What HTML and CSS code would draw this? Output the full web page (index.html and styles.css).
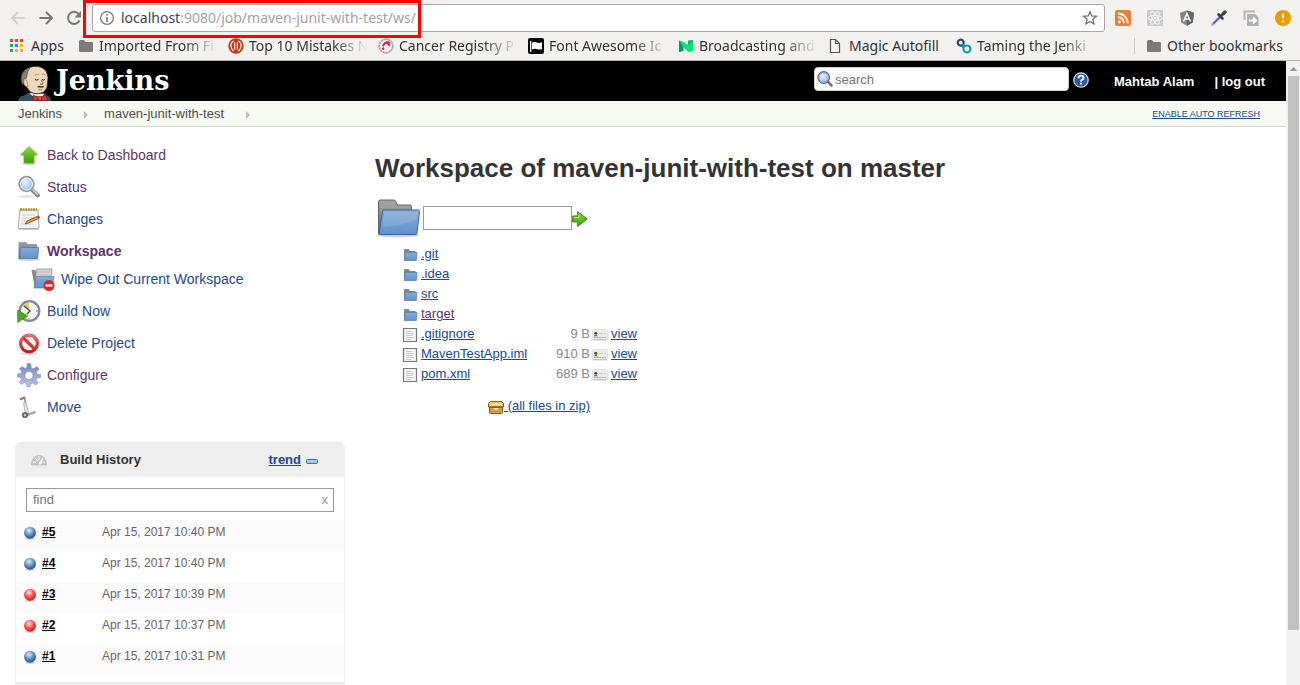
FILE: index.html
```html
<!DOCTYPE html>
<html lang="en">
<head>
<meta charset="utf-8">
<title>Workspace of maven-junit-with-test on master [Jenkins]</title>
<link rel="stylesheet" href="styles.css">
</head>
<body>
<svg class="defs" aria-hidden="true">
  <defs>
    <linearGradient id="blueFill" x1="0" y1="0" x2="0" y2="1"><stop offset="0" stop-color="#85add9"/><stop offset="1" stop-color="#5f92cb"/></linearGradient>
    <linearGradient id="greyFill" x1="0" y1="0" x2="0" y2="1"><stop offset="0" stop-color="#a3a3a3"/><stop offset="1" stop-color="#666"/></linearGradient>
    <linearGradient id="greenFill" x1="0" y1="0" x2="0" y2="1"><stop offset="0" stop-color="#8fda3a"/><stop offset="1" stop-color="#3c9d08"/></linearGradient>
    <linearGradient id="gearFill" x1="0" y1="0" x2="0" y2="1"><stop offset="0" stop-color="#6d87b5"/><stop offset="1" stop-color="#c5c1e6"/></linearGradient>
    <linearGradient id="redFill" x1="0" y1="0" x2="0" y2="1"><stop offset="0" stop-color="#f07070"/><stop offset="1" stop-color="#cc1010"/></linearGradient>
    <radialGradient id="blueBall" cx=".42" cy=".32" r=".65"><stop offset="0" stop-color="#e4efec"/><stop offset=".5" stop-color="#6f9ccb"/><stop offset="1" stop-color="#24539a"/></radialGradient>
    <radialGradient id="redBall" cx=".42" cy=".32" r=".65"><stop offset="0" stop-color="#ffe4e4"/><stop offset=".5" stop-color="#fa6060"/><stop offset="1" stop-color="#e01818"/></radialGradient>
    <radialGradient id="lens" cx=".4" cy=".35" r=".7"><stop offset="0" stop-color="#e6f1fc"/><stop offset="1" stop-color="#8fb8e8"/></radialGradient>
  </defs>
  <symbol id="tabFolder" viewBox="0 0 16 16"><path d="M1 3.500q0-1.500 1.500-1.500H6l1.500 2H14q1 0 1 1v8q0 1-1 1H2q-1 0-1-1z" fill="#7b7b7b"/></symbol>
  <symbol id="folder" viewBox="0 0 44 40">
    <ellipse cx="22" cy="37" rx="21" ry="2.500" fill="#000" opacity=".18"/>
    <path d="M2.500 36V3.500q0-1.500 1.500-1.500h14q1 0 1.500 1l2 4H34q1.500 0 1.500 1.500v27.500z" fill="url(#greyFill)" stroke="#666"/>
    <path d="M5 6h14M5 9h29M5 12h29" stroke="#b5b5b5" opacity=".6"/>
    <path d="M6.500 13.500q0-1.500 1.500-1.500h34q1.500 0 1.500 1.500l-2.500 21.500q-.2 1.500-1.500 1.500H4.500q-1.500 0-1.300-1.500z" fill="url(#blueFill)" stroke="#3465a4"/>
    <path d="M8 13.500h34l-1 8Q26 28 6.500 29z" fill="#fff" opacity=".12"/>
  </symbol>
  <symbol id="mediumFolder" viewBox="0 0 24 24"><ellipse cx="12" cy="20.500" rx="11" ry="1.500" fill="#000" opacity=".18"/><path d="M1.500 20V4q0-1 1-1h7l1 2H19q1 0 1 1v14z" fill="url(#greyFill)"/><path d="M4 8.500h17.500l-.8 11H2.800z" fill="url(#blueFill)" stroke="#5784b8"/></symbol>
  <symbol id="smallFolder" viewBox="0 0 16 16"><path d="M2 13.500V3q0-1 1-1h3.500L8 4h5.500v9z" fill="#858585"/><path d="M3.500 5.500h11.500l-.7 8H2.600z" fill="url(#blueFill)" stroke="#5784b8" stroke-width=".8"/></symbol>
  <symbol id="file" viewBox="0 0 16 16"><path d="M1.500 1.500h13v13h-13z" fill="#f4f4f3" stroke="#777" stroke-width="1.200"/><path d="M4 4.500h6M4 6.500h8M4 8.500h7M4 10.500h8M4 12.500h5" stroke="#c8c8c8" stroke-width=".9"/></symbol>
  <symbol id="card" viewBox="0 0 16 12"><rect x=".5" y=".5" width="15" height="10.500" rx="1" fill="#ebebea" stroke="#e2e2e2"/><path d="M1 10.700h14" stroke="#bbb"/><circle cx="3.800" cy="4.300" r="1.500" fill="#6a4b16"/><path d="M1.800 7.200q2-3 4 0z" fill="#4e7d16"/><path d="M7 4.500h4m1 0h2" stroke="#ccc"/><path d="M2 8.500h12" stroke="#aaa" stroke-dasharray="2 .6"/></symbol>
  <symbol id="magnifier" viewBox="0 0 24 24"><ellipse cx="10" cy="21.500" rx="9" ry="1.500" fill="#000" opacity=".1"/><path d="m14 14 7 6.500" stroke="#888" stroke-width="4" stroke-linecap="round"/><path d="m15.500 14.500 5.500 5" stroke="#ddd" stroke-width="1.500"/><circle cx="9.500" cy="9" r="7.300" fill="url(#lens)" stroke="#999" stroke-width="1.800"/><circle cx="9.500" cy="9" r="6" fill="none" stroke="#eef4fb"/></symbol>
  <symbol id="searchIcon" viewBox="0 0 16 16"><path d="m11 11 3.500 3.500" stroke="#777" stroke-width="2.600" stroke-linecap="round"/><circle cx="6.700" cy="6.500" r="5.800" fill="url(#lens)" stroke="#666" stroke-width="1.200"/><circle cx="6.700" cy="6.500" r="4.600" fill="none" stroke="#86aee0"/></symbol>
  <symbol id="blue" viewBox="0 0 14 14"><ellipse cx="7" cy="12.600" rx="5" ry="1.200" fill="#000" opacity=".18"/><circle cx="7" cy="6.700" r="6" fill="url(#blueBall)"/></symbol>
  <symbol id="red" viewBox="0 0 14 14"><ellipse cx="7" cy="12.600" rx="5" ry="1.200" fill="#000" opacity=".18"/><circle cx="7" cy="6.700" r="6" fill="url(#redBall)"/></symbol>
</svg>

<header class="browser">
  <div class="toolbar">
    <button class="nav" aria-label="Back"><svg width="16" height="16" viewBox="0 0 16 16"><path d="M14.500 8H2M8 2 2 8l6 6" fill="none" stroke="#d2d0ce" stroke-width="2"/></svg></button>
    <button class="nav" aria-label="Forward"><svg width="16" height="16" viewBox="0 0 16 16"><path d="M1.500 8H14M8 2l6 6-6 6" fill="none" stroke="#777" stroke-width="2"/></svg></button>
    <button class="nav" aria-label="Reload"><svg width="16" height="16" viewBox="0 0 16 16"><path d="M13.500 10.500A6 6 0 1 1 12.700 4" fill="none" stroke="#777" stroke-width="2"/><path d="M15 1v6.500H8.500z" fill="#777"/></svg></button>
    <div class="address">
      <svg width="16" height="16" viewBox="0 0 16 16"><circle cx="8" cy="8" r="6.400" fill="none" stroke="#777" stroke-width="1.300"/><path d="M8 7v5M8 4v1.700" stroke="#777" stroke-width="1.600"/></svg>
      <span class="url"><b>localhost</b>:9080/job/maven-junit-with-test/ws/</span>
      <button aria-label="Bookmark this page"><svg width="16" height="16" viewBox="0 0 16 16"><path d="m8 1.700 1.800 4.200 4.600.4-3.500 3 1.100 4.500L8 11.400l-4 2.400 1.100-4.500-3.500-3 4.600-.4z" fill="none" stroke="#707070" stroke-width="1.300"/></svg></button>
      <div class="highlight"></div>
    </div>
    <div class="extensions">
      <button aria-label="RSS"><svg width="16" height="16" viewBox="0 0 16 16"><rect width="16" height="16" rx="2.500" fill="#ed7d2b"/><circle cx="4.400" cy="11.700" r="1.500" fill="#fff"/><path d="M3 7.200a6 6 0 0 1 6 6M3 3.500a9.700 9.700 0 0 1 9.700 9.700" fill="none" stroke="#fff" stroke-width="1.900"/></svg></button>
      <button aria-label="React tools"><svg width="16" height="16" viewBox="0 0 16 16"><rect width="16" height="16" fill="#cbcbcb"/><g fill="none" stroke="#f4f4f4"><ellipse cx="8" cy="8" rx="7" ry="2.600"/><ellipse cx="8" cy="8" rx="7" ry="2.600" transform="rotate(60 8 8)"/><ellipse cx="8" cy="8" rx="7" ry="2.600" transform="rotate(120 8 8)"/></g><circle cx="8" cy="8" r="1.300" fill="#fff"/></svg></button>
      <button aria-label="Angular tools"><svg width="16" height="16" viewBox="0 0 16 16"><path d="m8 .5 7 2.300-1.200 9.700L8 15.700l-5.800-3.200L1 2.800z" fill="#858585"/><path d="m8 .5 7 2.300-1.200 9.700L8 15.700z" fill="#666"/><path d="M4.500 11.500 8 3.500l3.500 8M6 9h4" fill="none" stroke="#fff" stroke-width="1.500"/></svg></button>
      <button aria-label="Colour picker"><svg width="16" height="16" viewBox="0 0 16 16"><path d="m1.500 14.500 8-8" stroke="#aaa" stroke-width="2.800" stroke-linecap="round"/><path d="m2.500 13.500 6-6" stroke="#335de0" stroke-width="1.600"/><path d="m7.500 4.500 4 4M10.500 5.500l3-3" stroke="#404040" stroke-width="2.600" stroke-linecap="round"/><path d="M12.500 3.500 14 2" stroke="#444" stroke-width="3.500" stroke-linecap="round"/></svg></button>
      <button aria-label="Tab tool"><svg width="16" height="16" viewBox="0 0 16 16"><path d="M1.500 10V1.500H12" fill="none" stroke="#b5b5b5" stroke-width="2"/><path d="M4 4h8l3.500 3.500V16H4z" fill="#b0b0b0"/><path d="M6 10.500h7M10 7.500l3 3-3 3" fill="none" stroke="#fff" stroke-width="1.800"/></svg></button>
      <button aria-label="Browser menu"><svg width="16" height="16" viewBox="0 0 16 16"><circle cx="8" cy="8" r="8" fill="#f29900"/><path d="M8 3.500v5M8 10.500v2" stroke="#fff" stroke-width="2"/></svg></button>
    </div>
  </div>
  <nav class="bookmarks" aria-label="Bookmarks">
    <a class="apps" href="#"><svg width="14" height="14" viewBox="0 0 14 14"><path d="M0 0h3v3H0zM5 0h3v3H5zM10 0h3v3h-3z" fill="#e6413a"/><path d="M0 5h3v3H0zM0 10h3v3H0z" fill="#28a35a"/><path d="M5 5h3v3H5z" fill="#3d7bea"/><path d="M10 5h3v3h-3zM5 10h3v3H5zM10 10h3v3h-3z" fill="#f4b400"/></svg><span>Apps</span></a>
    <a class="mark" href="#"><svg width="16" height="16"><use href="#tabFolder"/></svg><span>Imported From Fi</span></a>
    <a class="mark" href="#"><svg width="16" height="16" viewBox="0 0 16 16"><circle cx="8" cy="8" r="7.700" fill="#c63b17"/><path d="M6 3Q2.500 4.500 3 8q.2 3.500 3 5M10 3q3.500 1.500 3 5-.2 3.500-3 5M6.700 4.500v7M9.300 4.500v7" fill="none" stroke="#fff" stroke-width="1.100"/></svg><span>Top 10 Mistakes N</span></a>
    <a class="mark" href="#"><svg width="16" height="16" viewBox="0 0 16 16"><circle cx="8" cy="8" r="6.800" fill="#f2f2f2" stroke="#aaa" stroke-width="1.800" stroke-dasharray="2.500 .4"/><path d="M6 4.500 9.500 3 12 4v5L9.500 6.500 6 9 4 8z" fill="#f0143f"/><path d="m5.500 8 3-2.500L10 8l-3 2.500z" fill="#fff"/><path d="m3.500 11 2-2 1 1.500-1 1.500z" fill="#f0143f"/></svg><span>Cancer Registry P</span></a>
    <a class="mark" href="#"><svg width="16" height="16" viewBox="0 0 16 16"><rect width="16" height="16" rx="2" fill="#000"/><path d="M4 4.500q3-1 5 0t5-.3V11q-3 1-5 .2t-5 .3z" fill="#fff"/><path d="M2.700 3v11" stroke="#fff" stroke-width="1.300"/></svg><span>Font Awesome Ic</span></a>
    <a class="mark" href="#"><svg width="16" height="16" viewBox="0 0 16 16"><path d="M1 2.500 5.500 5v8L1 14z" fill="#009b60"/><path d="M10 2.500 15 2v11l-5-2z" fill="#00bf70"/><path d="m1 2.500 5 1.500 4 3.500 5-4V13l-4.500 1L6 10z" fill="#00e775"/></svg><span>Broadcasting and</span></a>
    <a class="mark short" href="#"><svg width="14" height="16" viewBox="0 0 14 16"><path d="M2.500 1.500h5l4 4v9h-9zM7.500 1.500v4h4" fill="#f8f8f8" stroke="#555" stroke-width="1.200"/></svg><span>Magic Autofill</span></a>
    <a class="mark" href="#"><svg width="16" height="16" viewBox="0 0 16 16"><path d="M6.500 7A3 3 0 1 1 7.500 3.500V10" fill="none" stroke="#294b60" stroke-width="2.200"/><path d="M7.500 6v5a3.500 3.500 0 1 0 3.500-3.500q-1.500 0-2.500 1" fill="none" stroke="#1899b5" stroke-width="2.200"/></svg><span>Taming the Jenki</span></a>
    <a class="other" href="#"><svg width="16" height="16"><use href="#tabFolder"/></svg><span>Other bookmarks</span></a>
  </nav>
</header>

<div class="viewport">
  <div class="page">
    <div class="masthead">
      <a class="logo" href="#">
        <svg width="36" height="36" viewBox="0 0 36 36">
          <path d="M1 36q1-5 5-5l5-3h17l3 3q3 1 3 5z" fill="#335061"/>
          <path d="m12 28 6 5h7l2-4z" fill="#f0f0ee"/>
          <path d="M8 21Q5 18 5.500 12 7 3 16 1.500 26 .5 29.500 7q2.500 5 1 11 .5 5-3.500 9-5 2.500-10 1.500-5-1-7-6z" fill="#efd6b8" stroke="#2b211b" stroke-width=".8"/>
          <path d="M5.500 20Q3 15 5 9q2-5 8-6.500-3 4-3.500 10L8.500 14Q6 13 6.500 17z" fill="#85807c" stroke="#3d3a38" stroke-width=".6"/>
          <path d="M6.500 16q2-3 3.500 0l1 5.500q-4 .5-4.500-5.500" fill="#efd6b8" stroke="#8a6e56" stroke-width=".6"/>
          <path d="M17.500 10.500q2-2 4.500-1M25 9.500q2-1 3.500.5" fill="none" stroke="#9a806a" stroke-width=".7"/>
          <path d="M18 14.500q2 1.500 3.500-.2M25 14.500q1.500 1.200 3 0" fill="none" stroke="#35271d"/>
          <path d="M24 15q3 2.500 1.500 4.500l-2.500-.5" fill="none" stroke="#7a604b" stroke-width=".9"/>
          <path d="M20 22q2-2 4-.7 2-1 3.500.7-3.500 1.500-7.500 0" fill="#4a3a30"/>
          <path d="M21.500 24.500q2 1 4 0" fill="none" stroke="#8a5a48" stroke-width=".8"/>
          <path d="m16 30.500 5.500 1.500v3L17 36q-2-2-1-5.500m13-.5-5 2 .5 3.500 5 .5q1.500-3-.5-6" fill="#dd3431" stroke="#611815" stroke-width=".8"/>
          <rect x="21" y="31.500" width="3.500" height="4" rx="1" fill="#ef4a43" stroke="#611815" stroke-width=".6"/>
        </svg>
        <span>Jenkins</span>
      </a>
      <form class="search">
        <label for="q"><svg width="16" height="16"><use href="#searchIcon"/></svg></label>
        <input id="q" type="text" placeholder="search" aria-label="Search">
      </form>
      <a class="help" href="#" aria-label="Help"><svg width="16" height="16" viewBox="0 0 16 16"><circle cx="8" cy="8" r="7.200" fill="#32599b" stroke="#c9d9ef" stroke-width="1.300"/><path d="M5.500 6.200Q5.600 3.600 8 3.600t2.500 2.100Q10.500 7 9 7.700q-1 .6-1 1.800M8 10.700v1.900" fill="none" stroke="#fff" stroke-width="1.900"/></svg></a>
      <div class="account"><a href="#">Mahtab Alam</a><span>| <a href="#">log out</a></span></div>
    </div>

    <nav class="crumbs" aria-label="Breadcrumb">
      <a href="#">Jenkins</a><svg width="4" height="8" viewBox="0 0 4 8"><path d="M0 0v8l4-4z" fill="#babdb6"/></svg>
      <a href="#">maven-junit-with-test</a><svg width="4" height="8" viewBox="0 0 4 8"><path d="M0 0v8l4-4z" fill="#babdb6"/></svg>
      <a class="refresh" href="#">ENABLE AUTO REFRESH</a>
    </nav>

    <div class="columns">
      <aside class="side">
        <nav class="tasks" aria-label="Project">
          <a class="visited" href="#"><svg width="24" height="24" viewBox="0 0 24 24"><ellipse cx="12" cy="20.500" rx="7" ry="1.500" fill="#000" opacity=".18"/><path d="m12 3.500 8.500 8.500H17v8H7v-8H3.500z" fill="url(#greenFill)" stroke="#5eae29" stroke-width=".8"/></svg>Back to Dashboard</a>
          <a class="visited" href="#"><svg width="24" height="24"><use href="#magnifier"/></svg>Status</a>
          <a href="#"><svg width="24" height="24" viewBox="0 0 24 24"><path d="M1 22.300h21" stroke="#bbb"/><path d="M3 3h18l1 17q.2 1.500-1.500 1.500H2.500Q1 21.500 1.200 20z" fill="#f2f2ef" stroke="#aaa"/><path d="M3 2.500h17" stroke="#a99727" stroke-width="2.500" stroke-dasharray="2 .6"/><path d="M5 8h13M5 11h12M5 14h8M4 17h12" stroke="#d0d0d0"/><path d="m8 17 2-3 11-5 1.500 2-11 5z" fill="#e39a45" stroke="#71471f" stroke-width=".8"/><path d="m21.500 8.500-1.500 1 1 2 2.500-1z" fill="#d63e31"/></svg>Changes</a>
          <a class="visited current" href="#"><svg width="24" height="24"><use href="#mediumFolder"/></svg>Workspace</a>
          <a class="sub" href="#"><svg width="24" height="24" viewBox="0 0 24 24"><path d="M.5 3h4l3 18H4z" fill="#888"/><path d="M6 2h15l-1 10H4z" fill="#d8d8d8" stroke="#888" stroke-width=".8"/><path d="M7 5h12M7 8h12" stroke="#b5b5b5"/><path d="M5 9.500h18l-2 11.500H3z" fill="url(#blueFill)" stroke="#5784b8" stroke-width=".7"/><circle cx="18" cy="18.500" r="5.500" fill="#db2424"/><path d="M14.500 18.500h7" stroke="#fff" stroke-width="2.200"/></svg>Wipe Out Current Workspace</a>
          <a href="#"><svg width="24" height="24" viewBox="0 0 24 24"><circle cx="12.500" cy="12" r="9.800" fill="#f3f3ed" stroke="#88859d" stroke-width="2.300"/><path d="M12 11V4Q8 4 6 7z" fill="#e7c963"/><path d="m7 7 6 5-3 3" fill="none" stroke="#444" stroke-width="1.300"/><path d="M18 6l1-1m0 7h2m-9 7v1" stroke="#777"/><path d="m.7 11 10 6-10 6.500z" fill="#4bac19" stroke="#43861e" stroke-width=".8"/></svg>Build Now</a>
          <a href="#"><svg width="24" height="24" viewBox="0 0 24 24"><ellipse cx="12" cy="22.500" rx="8" ry="1.200" fill="#000" opacity=".18"/><circle cx="12" cy="12.500" r="8.400" fill="none" stroke="#c94040" stroke-width="3.200"/><path d="m6 6.500 12 12" stroke="#c94040" stroke-width="3.200"/><circle cx="12" cy="12.500" r="8.400" fill="none" stroke="url(#redFill)" stroke-width="2.200"/><path d="m6 6.500 12 12" stroke="#e63434" stroke-width="2.200"/></svg>Delete Project</a>
          <a class="visited" href="#"><svg width="24" height="24" viewBox="0 0 24 24"><path fill-rule="evenodd" d="M10.500.5h3l.8 4.500 2.200.8L20 3.500 22 6l-2.500 3 .7 2 3.300.5v3l-3.600.5-1 2 2.300 3-2.500 2-3-2-2 .8-.7 2.700h-3l-.7-3.200-2-.8-3 2-2-2 2-3-.7-2L.5 14v-3l3.300-.7.8-2L2.500 5.500 5 3.500l3 2 1.700-.7zM12 8.500a4 4 0 1 0 .01 8 4 4 0 0 0 0-8" fill="url(#gearFill)" stroke="#8292b7" stroke-width=".6"/></svg>Configure</a>
          <a href="#"><svg width="24" height="24" viewBox="0 0 24 24"><path d="m3.500 4.500 4-2 3 16" fill="none" stroke="#888" stroke-width="1.600"/><path d="m3 4.500 4-2" stroke="#d94a4a" stroke-width="1.600"/><path d="m6.500 8 2.500-1 2.500 11-3 1z" fill="#e5e5e2" stroke="#aaa" stroke-width=".8"/><path d="m10 20 8.500-3" stroke="#aaa" stroke-width="2.500"/><circle cx="8" cy="20" r="2.200" fill="#ccc" stroke="#444" stroke-width="1.300"/></svg>Move</a>
        </nav>

        <section class="history">
          <h2>
            <svg width="16" height="12" viewBox="0 0 16 12"><path d="M.5 11Q0 6 3.500 3 7 0 11 2q4 2 4.500 9z" fill="#c5c5c5" stroke="#bbb" stroke-width=".7"/><path d="M2 8h3M4 4l3 3M8 2v4M12 4l-4 6h2zm0 4 2 1" stroke="#f7f7f7" fill="#fff"/></svg>
            <span>Build History</span>
            <a href="#">trend</a>
            <button aria-label="Collapse"><svg width="12" height="5" viewBox="0 0 12 5"><rect x=".5" y=".5" width="11" height="4" rx="1" fill="#9ecbea" stroke="#3671ad"/></svg></button>
          </h2>
          <div class="find"><input type="text" placeholder="find" aria-label="Find builds"><button aria-label="Clear">x</button></div>
          <table class="builds">
            <tr><td><svg width="14" height="14"><use href="#blue"/></svg></td><td><a href="#">#5</a></td><td>Apr 15, 2017 10:40 PM</td></tr>
            <tr><td><svg width="14" height="14"><use href="#blue"/></svg></td><td><a href="#">#4</a></td><td>Apr 15, 2017 10:40 PM</td></tr>
            <tr><td><svg width="14" height="14"><use href="#red"/></svg></td><td><a href="#">#3</a></td><td>Apr 15, 2017 10:39 PM</td></tr>
            <tr><td><svg width="14" height="14"><use href="#red"/></svg></td><td><a href="#">#2</a></td><td>Apr 15, 2017 10:37 PM</td></tr>
            <tr><td><svg width="14" height="14"><use href="#blue"/></svg></td><td><a href="#">#1</a></td><td>Apr 15, 2017 10:31 PM</td></tr>
          </table>
          <div class="feeds"></div>
        </section>
      </aside>

      <main class="content">
        <h1>Workspace of maven-junit-with-test on master</h1>
        <form class="path">
          <svg width="44" height="40"><use href="#folder"/></svg>
          <input type="text" aria-label="Path">
          <button aria-label="Go"><svg width="16" height="16" viewBox="0 0 16 16"><path d="M.7 5h5V.7L15.300 8l-9.600 7.300V11h-5z" fill="url(#greenFill)" stroke="#3a7d08"/><path d="M2 6.500h5v-3" fill="none" stroke="#b9ea7a"/></svg></button>
        </form>
        <table class="files">
          <tr><td><svg width="16" height="16"><use href="#smallFolder"/></svg></td><td><a href="#">.git</a></td><td></td><td></td></tr>
          <tr><td><svg width="16" height="16"><use href="#smallFolder"/></svg></td><td><a href="#">.idea</a></td><td></td><td></td></tr>
          <tr><td><svg width="16" height="16"><use href="#smallFolder"/></svg></td><td><a href="#">src</a></td><td></td><td></td></tr>
          <tr><td><svg width="16" height="16"><use href="#smallFolder"/></svg></td><td><a class="visited" href="#">target</a></td><td></td><td></td></tr>
          <tr><td><svg width="16" height="16"><use href="#file"/></svg></td><td><a href="#">.gitignore</a></td><td>9 B</td><td><svg width="16" height="12"><use href="#card"/></svg><a href="#">view</a></td></tr>
          <tr><td><svg width="16" height="16"><use href="#file"/></svg></td><td><a href="#">MavenTestApp.iml</a></td><td>910 B</td><td><svg width="16" height="12"><use href="#card"/></svg><a href="#">view</a></td></tr>
          <tr><td><svg width="16" height="16"><use href="#file"/></svg></td><td><a href="#">pom.xml</a></td><td>689 B</td><td><svg width="16" height="12"><use href="#card"/></svg><a href="#">view</a></td></tr>
          <tr class="zip"><td colspan="3"><a href="#"><svg width="16" height="16" viewBox="0 0 16 16"><path d="M1.500 8h13v5.500q0 1-1 1h-11q-1 0-1-1z" fill="#d59a43" stroke="#8f5902"/><path d="M2.500 2.500h11l2 2V8H.5V4.500z" fill="#f0c57d" stroke="#8f5902"/><path d="M2.500 5.500h11" stroke="#fff0c8"/><path d="M1 8h14" stroke="#8f5902"/><rect x="5.500" y="9" width="5" height="1.500" fill="#fff1d5"/></svg> (all files in zip)</a></td><td></td></tr>
        </table>
      </main>
    </div>
  </div>
  <div class="scroll" aria-hidden="true"><svg width="14" height="15" viewBox="0 0 14 15"><path d="m3.500 10 4-4 4 4z" fill="#999"/></svg><div class="thumb"></div></div>
</div>
</body>
</html>
```
FILE: styles.css
```css
* { box-sizing: border-box; }
body {
  margin: 0;
  height: 100vh;
  overflow: hidden;
  display: flex;
  flex-direction: column;
  font: 13px/16px "Liberation Sans", Arial, sans-serif;
  color: #333;
  background: #fff;
}
svg { display: block; flex: none; }
.defs { position: absolute; width: 0; height: 0; }
a { color: #204a87; }
button { padding: 0; border: 0; background: none; font: inherit; color: inherit; }
input { font: inherit; border-radius: 0; outline: 0; }
input::placeholder { color: #757575; opacity: 1; }
table { border-collapse: collapse; }
td { padding: 0; }
.visited { color: #5c3566; }

/* Browser chrome */
.browser {
  background: #f2f1f0;
  border-bottom: 1px solid #b3b2b1;
  font: 14px/20px "Noto Sans", "Open Sans", sans-serif;
}
.toolbar { display: flex; align-items: center; padding: 4px 9px 0 10px; height: 32px; }
.nav { width: 28px; }
.nav:nth-child(3) { width: 26px; }
.address {
  position: relative;
  flex: 1;
  display: flex;
  align-items: center;
  height: 28px;
  padding: 0 6px;
  background: #fff;
  border: 1px solid #a8a7a6;
  border-radius: 3px;
}
.url { flex: 1; margin-left: 6px; color: #a3a3a3; }
.url b { font-weight: 400; color: #444; }
.highlight {
  position: absolute;
  left: -10px;
  top: -5px;
  width: 338px;
  height: 38px;
  border: 3px solid #f00;
  pointer-events: none;
}
.extensions { display: flex; gap: 16px; margin-left: 10px; }
.bookmarks { display: flex; align-items: center; height: 28px; padding: 0 13px 0 10px; }
.bookmarks a { display: flex; gap: 5px; align-items: center; color: #333; text-decoration: none; white-space: nowrap; }
.bookmarks .apps { gap: 7px; width: 68px; }
.bookmarks .mark { width: 150px; }
.bookmarks .mark span {
  -webkit-mask-image: linear-gradient(to right, #000 85px, transparent 118px);
  mask-image: linear-gradient(to right, #000 85px, transparent 118px);
}
.bookmarks .short { gap: 7px; width: 128px; }
.bookmarks .short span { -webkit-mask-image: none; mask-image: none; }
.bookmarks .other { width: 153px; margin-left: auto; padding-left: 11px; border-left: 1px solid #ccc; line-height: 16px; }

.viewport { flex: 1; min-height: 0; display: flex; }
.page { flex: 1; min-width: 0; overflow: hidden; }
.scroll { width: 14px; background: #f1f1f1; display: flex; flex-direction: column; }
.thumb { flex: 1; width: 11px; margin: 0 0 55px 2px; background: #c1c1c1; }

/* Header */
.masthead { display: flex; align-items: center; height: 40px; padding: 0 21px 0 17px; background: #000; color: #fff; font-weight: 700; }
.masthead a { color: #fff; text-decoration: none; }
.logo { display: flex; align-items: center; gap: 3px; padding-top: 4px; margin-right: auto; font: 700 27px/32px "DejaVu Serif", Georgia, serif; }
.logo span { padding-bottom: 4px; }
.search { display: flex; align-items: center; gap: 2px; width: 255px; height: 24px; margin-bottom: 4px; padding-left: 2px; background: #fff; border: 1px solid #ccc; border-radius: 4px; font-weight: 400; }
.search input { flex: 1; min-width: 0; border: 0; padding: 1px 0 0; background: none; }
.help { margin: 0 25px 2px 4px; }
.account { display: flex; gap: 20px; padding-top: 2px; }

.crumbs { display: flex; align-items: center; height: 26px; padding: 0 26px 0 18px; background: #f6faf2; border-bottom: 1px solid #d3d7cf; }
.crumbs a { color: #4d4d4d; text-decoration: none; }
.crumbs svg { margin: 2px 16px 0 22px; }
.crumbs .refresh { margin-left: auto; font-size: 9px; color: #204a87; text-decoration: underline; }

/* Side panel */
.columns { display: flex; }
.side { width: 345px; padding: 12px 0 0 15px; }
.tasks { display: flex; flex-direction: column; font-size: 14px; }
.tasks a { display: flex; align-items: center; gap: 6px; height: 32px; padding-left: 2px; text-decoration: none; }
.tasks .current { font-weight: 700; }
.tasks .sub { height: 28px; padding: 0 0 4px 16px; }

.history { margin-top: 19px; border: 1px solid #eee; border-radius: 6px 6px 0 0; }
.history h2 { display: flex; align-items: center; height: 34px; margin: 0; padding: 0 26px 0 15px; background: #eee; font-size: 13px; border-radius: 5px 5px 0 0; }
.history h2 span { flex: 1; margin-left: 13px; }
.history h2 button { margin: 2px 0 0 5px; }
.find { display: flex; align-items: center; height: 24px; margin: 11px 10px 8px; padding: 0 5px 0 6px; border: 1px solid #999; }
.find input { flex: 1; min-width: 0; padding: 0; border: 0; }
.find button { color: #999; }
.builds { width: 100%; table-layout: fixed; font-size: 12px; color: #666; }
.builds tr { height: 31px; }
.builds tr:nth-child(odd) { background: #fbfbfb; }
.builds td { padding-bottom: 7px; vertical-align: middle; }
.builds td:first-child { width: 26px; padding: 0 0 5px 7px; }
.builds td:nth-child(2) { width: 60px; }
.builds a { color: #000; font-weight: 700; }
.feeds { height: 30px; margin-top: 7px; background: #eee; }

/* Workspace */
.content { flex: 1; padding: 25px 20px 0 30px; }
h1 { margin: 0; font-size: 26px; line-height: 32px; }
.path { display: flex; align-items: center; height: 40px; margin-top: 14px; }
.path svg { margin-left: 1px; }
.path input { width: 149px; height: 24px; margin-left: 3px; border: 1px solid #999; }
.path button svg { margin: 2px 0 0; }
.files { margin: 6px 0 0 27px; }
.files tr { height: 20px; }
.files td:first-child { width: 19px; }
.files td:nth-child(2) { min-width: 107px; }
.files td:nth-child(3) { width: 62px; text-align: right; color: #888; }
.files td:nth-child(4) svg { display: inline-block; margin: 0 3px 0 2px; vertical-align: -3px; }
.files td:first-child svg { margin-top: 1px; }
.files .zip { height: 44px; }
.files .zip td:first-child { text-align: right; }
.files .zip svg { display: inline-block; margin: 0; vertical-align: -5px; }
```
